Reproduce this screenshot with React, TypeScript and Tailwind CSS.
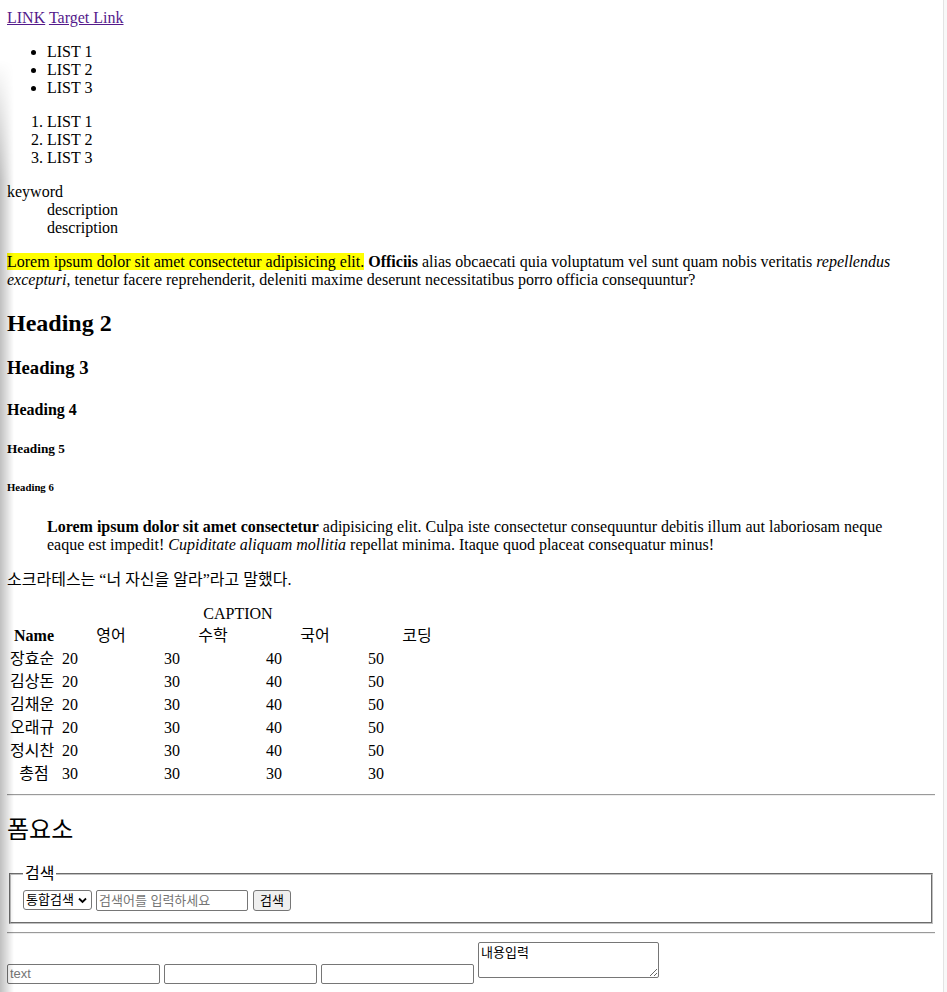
import React from "react";

const names = ["장효순", "김상돈", "김채운", "오래규", "정시찬"];
const subjects = ["영어", "수학", "국어", "코딩"];

export default function App() {
  return (
    <div className="flex min-h-screen bg-white text-black">
      <div className="w-[943px] shrink-0 pt-[9px] pr-2 pb-2 pl-[7px] font-['Liberation_Serif','Noto_Sans_CJK_KR',serif] text-[16px] leading-[18px]">
        <div>
          <a href="#" className="text-[#551a8b] underline">
            LINK
          </a>{" "}
          <a href="#" className="text-[#551a8b] underline">
            Target Link
          </a>
        </div>

        <ul className="my-4 list-disc pl-10">
          <li>LIST 1</li>
          <li>LIST 2</li>
          <li>LIST 3</li>
        </ul>

        <ol className="my-4 list-decimal pl-10">
          <li>LIST 1</li>
          <li>LIST 2</li>
          <li>LIST 3</li>
        </ol>

        <dl className="my-4">
          <dt>keyword</dt>
          <dd className="ml-10">description</dd>
          <dd className="ml-10">description</dd>
        </dl>

        <p className="my-4">
          <mark className="bg-[#ffff00] text-black">Lorem ipsum dolor sit amet consectetur adipisicing elit.</mark>{" "}
          <strong className="font-bold">Officiis</strong> alias obcaecati quia voluptatum vel sunt quam nobis veritatis{" "}
          <em className="italic">repellendus excepturi</em>, tenetur facere reprehenderit, deleniti maxime deserunt
          necessitatibus porro officia consequuntur?
        </p>

        <h2 className="my-[20px] text-[24px] font-bold leading-[28px]">Heading 2</h2>
        <h3 className="my-[18.72px] text-[18.72px] font-bold leading-[21.5px]">Heading 3</h3>
        <h4 className="my-[21.28px] text-[16px] font-bold leading-[19px]">Heading 4</h4>
        <h5 className="my-[22.18px] text-[13.28px] font-bold leading-[15px]">Heading 5</h5>
        <h6 className="my-[24.98px] text-[10.72px] font-bold leading-[12px]">Heading 6</h6>

        <blockquote className="mx-10 my-4">
          <strong className="font-bold">Lorem ipsum dolor sit amet consectetur</strong> adipisicing elit. Culpa iste
          consectetur consequuntur debitis illum aut laboriosam neque eaque est impedit!{" "}
          <em className="italic">Cupiditate aliquam mollitia</em> repellat minima. Itaque quod placeat consequatur
          minus!
        </blockquote>

        <p className="my-4 leading-[19px]">소크라테스는 “너 자신을 알라”라고 말했다.</p>

        <table className="mt-4 border-separate border-spacing-[2px] leading-[19px]">
          <caption className="leading-[18px]">CAPTION</caption>
          <thead>
            <tr>
              <th className="w-[50px] p-px text-center font-bold">Name</th>
              {subjects.map((s) => (
                <th key={s} className="w-[100px] p-px text-center font-normal">
                  {s}
                </th>
              ))}
            </tr>
          </thead>
          <tbody>
            {names.map((n) => (
              <tr key={n}>
                <td className="p-px">{n}</td>
                <td className="p-px">20</td>
                <td className="p-px">30</td>
                <td className="p-px">40</td>
                <td className="p-px">50</td>
              </tr>
            ))}
          </tbody>
          <tfoot>
            <tr>
              <th className="p-px text-center font-normal">총점</th>
              <td className="p-px">30</td>
              <td className="p-px">30</td>
              <td className="p-px">30</td>
              <td className="p-px">30</td>
            </tr>
          </tfoot>
        </table>

        <hr className="my-2 border-t border-b border-t-[#9a9a9a] border-b-[#eeeeee]" />

        <h2 className="my-[20px] text-[24px] font-normal leading-[28px]">폼요소</h2>

        <form className="font-['Liberation_Sans','Noto_Sans_CJK_KR',sans-serif] text-[13px]">
          <fieldset className="mx-[2px] border-2 border-[#c0c0c0] px-[12px] pt-[6px] pb-[11px] [border-style:groove]">
            <legend className="px-[2px] font-['Liberation_Serif','Noto_Sans_CJK_KR',serif] text-[16px] leading-[20px]">
              검색
            </legend>
            <div className="flex items-center">
              <span className="inline-flex h-[20px] w-[69px] items-center justify-between rounded-[3px] border border-[#767676] pl-[2px] pr-[4px]">
                <select className="appearance-none bg-transparent leading-[16px] text-black outline-none">
                  <option>통합검색</option>
                </select>
                <svg width="9" height="7" viewBox="0 0 9 7" className="shrink-0">
                  <path d="M1 1.5 L4.5 5 L8 1.5" fill="none" stroke="#000" strokeWidth="1.8" />
                </svg>
              </span>
              <input
                className="ml-1 h-[21px] w-[152px] rounded-[2px] border border-[#767676] px-[2px] outline-none placeholder:text-[#757575]"
                placeholder="검색어를 입력하세요"
              />
              <button
                type="button"
                className="ml-[5px] h-[21px] rounded-[3px] border border-[#767676] bg-[#efefef] px-[6px] leading-[17px]"
              >
                검색
              </button>
            </div>
          </fieldset>

          <hr className="my-2 border-t border-b border-t-[#9a9a9a] border-b-[#eeeeee]" />

          <div className="flex items-end gap-1">
            <input
              className="h-[20px] w-[153px] rounded-[2px] border border-[#767676] px-[2px] outline-none placeholder:text-[#757575]"
              placeholder="text"
            />
            <input className="h-[20px] w-[153px] rounded-[2px] border border-[#767676] px-[2px] outline-none" />
            <input className="h-[20px] w-[153px] rounded-[2px] border border-[#767676] px-[2px] outline-none" />
            <textarea
              className="mb-[6px] h-[36px] w-[181px] rounded-[2px] border border-[#767676] p-[2px] leading-[16px] outline-none"
              defaultValue="내용입력"
            />
          </div>
        </form>
      </div>

      <div className="flex-1 border-l border-[#e3e3e3] bg-[#f8f8f8]" />

      {/* edge shade over the page */}
      <div className="pointer-events-none fixed top-[60px] bottom-0 left-0 w-[14px] bg-linear-to-r from-black/25 to-transparent [mask-image:linear-gradient(to_bottom,transparent,black_120px)]" />
    </div>
  );
}
